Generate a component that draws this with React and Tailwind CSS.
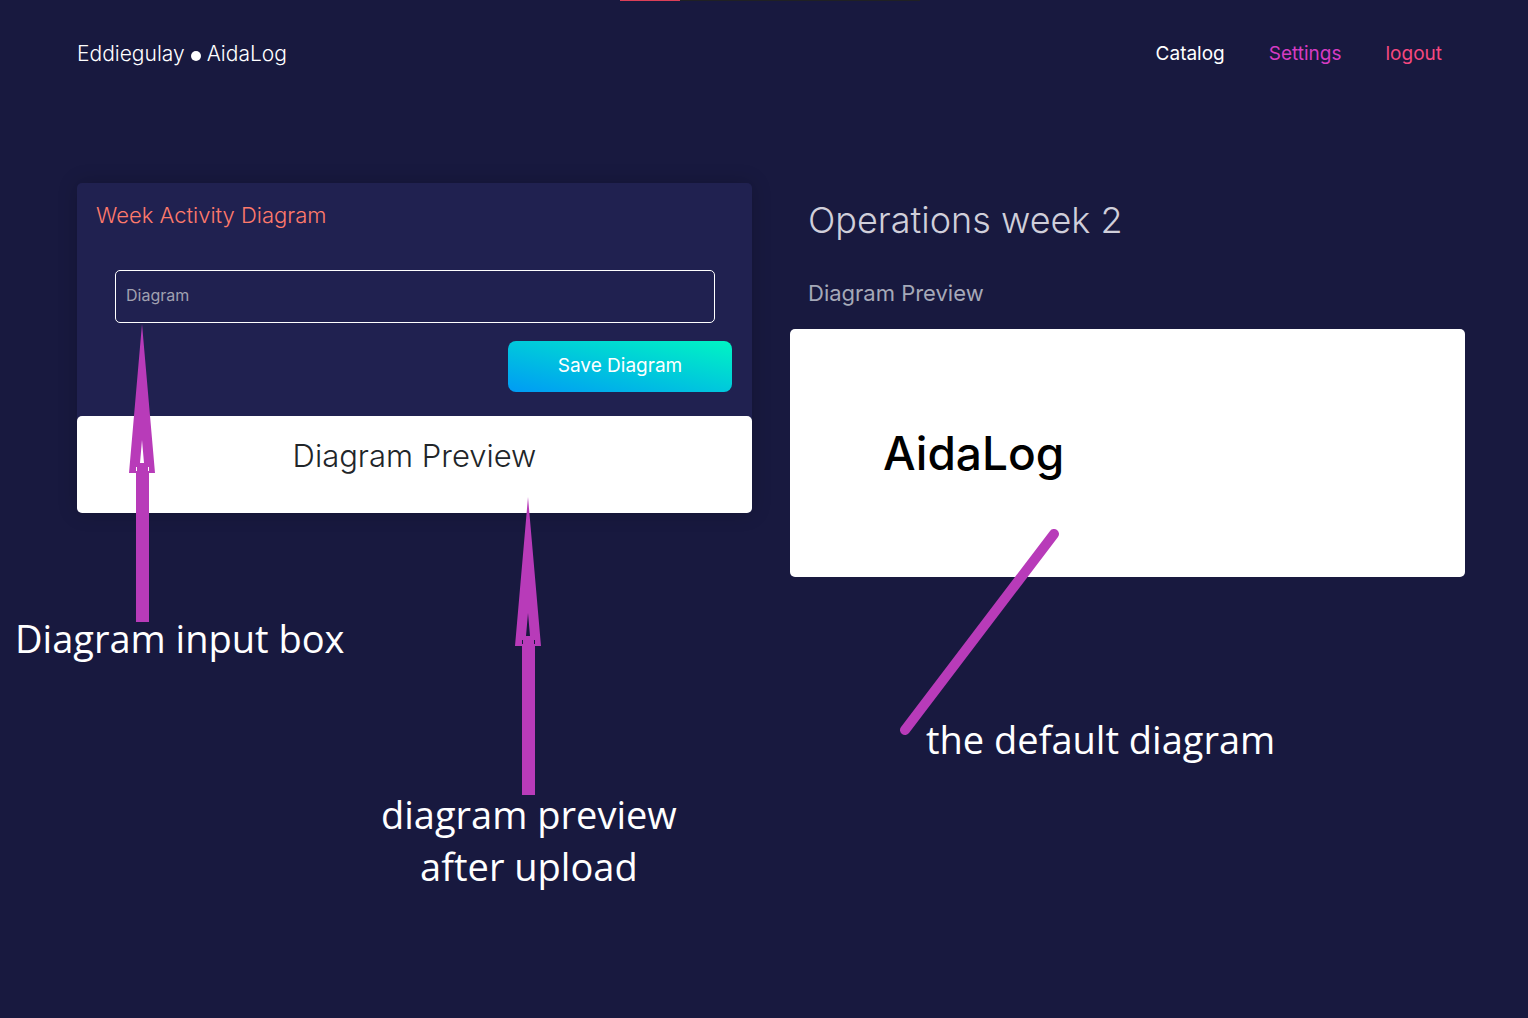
import React from "react";

const navLinks = [
  { label: "Catalog", color: "text-white" },
  { label: "Settings", color: "text-[#d63cc3]" },
  { label: "logout", color: "text-[#f5487f]" },
];

function ArrowUp() {
  return (
    <svg width="26" height="300" viewBox="0 0 26 300" fill="#b83bb9" aria-hidden="true">
      <path
        fillRule="evenodd"
        d="M13 0L26 149H20V298H7V149H0ZM13 116L11 139H15ZM7 143V147H8V143ZM19 143V147H20V143Z"
      />
    </svg>
  );
}

function Header() {
  return (
    <header className="flex items-center justify-between pt-9 pr-2">
      <a href="#home" className="flex items-center gap-[6px] text-[21px] leading-9 font-light">
        <span>Eddiegulay</span>
        <span className="mt-1 size-[10px] rounded-full bg-white" />
        <span>AidaLog</span>
      </a>
      <nav className="flex gap-11 pr-[15px] text-[19px] leading-9">
        {navLinks.map((link) => (
          <a key={link.label} href={"#" + link.label.toLowerCase()} className={link.color}>
            {link.label}
          </a>
        ))}
      </nav>
    </header>
  );
}

function DiagramForm() {
  return (
    <section className="relative">
      <div className="rounded-[5px] bg-[#202150] shadow-[0_0_20px_rgba(0,0,0,0.2)]">
        <form className="pt-4 pr-5 pb-6 pl-[19px]" onSubmit={(e) => e.preventDefault()}>
          <h2 className="text-[22px] leading-8 font-light text-[#fe7a6b]">Week Activity Diagram</h2>
          <div className="mt-[39px] mr-[17px] ml-[19px]">
            <input
              type="text"
              aria-label="Diagram"
              placeholder="Diagram"
              className="h-[53px] w-full rounded-[5px] border border-white bg-transparent px-[10px] pb-1 text-base text-white outline-none placeholder:text-[#a0a1b0]"
            />
          </div>
          <div className="mt-[18px] flex justify-end">
            <button
              type="submit"
              className="h-[51px] w-56 rounded-lg bg-[linear-gradient(to_top_right,#009bf5_0%,#00f5c3_100%)] text-[19px] text-white"
            >
              Save Diagram
            </button>
          </div>
        </form>
        <div className="h-[97px] rounded-[5px] bg-white pt-5 text-center text-[31px] leading-10 font-light text-[#212529]">
          Diagram Preview
        </div>
      </div>

      <div className="pointer-events-none absolute top-[141px] left-[52px]">
        <ArrowUp />
      </div>
      <p className="absolute top-[429px] left-[-62px] font-['Open_Sans',sans-serif] text-[38px] leading-[52px] whitespace-nowrap">
        Diagram input box
      </p>
      <div className="pointer-events-none absolute top-[314px] left-[438px]">
        <ArrowUp />
      </div>
      <p className="absolute top-[605px] left-[304px] text-center font-['Open_Sans',sans-serif] text-[38px] leading-[52px] whitespace-nowrap">
        diagram preview
        <br />
        after upload
      </p>
    </section>
  );
}

function Operations() {
  return (
    <section className="relative">
      <div className="pt-3 pl-[18px]">
        <h1 className="text-4xl leading-[50px] font-light text-[#d0cfda]">Operations week 2</h1>
        <h2 className="mt-8 text-[22px] leading-8 font-normal text-[#a5a9b8]">Diagram Preview</h2>
      </div>
      <div className="mt-5 h-[248px] rounded-[5px] bg-white pt-24 pl-[93px]">
        <span className="text-[46px] leading-[56px] font-medium text-black">AidaLog</span>
      </div>

      <svg
        className="pointer-events-none absolute top-[346px] left-[110px]"
        width="160"
        height="208"
        viewBox="0 0 160 208"
        aria-hidden="true"
      >
        <path d="M154 5L5 201" stroke="#b83bb9" strokeWidth="10" strokeLinecap="round" />
      </svg>
      <p className="absolute top-[530px] left-[136px] font-['Open_Sans',sans-serif] text-[38px] leading-[52px] whitespace-nowrap">
        the default diagram
      </p>
    </section>
  );
}

export default function App() {
  return (
    <div className="min-h-screen bg-[#18193f] font-['Inter',sans-serif] text-white">
      <div className="absolute top-0 left-1/2 -ml-36 flex h-px w-[300px] bg-[#202124]">
        <div className="w-[60px] bg-[#dc3f58]" />
      </div>
      <div className="pr-[63px] pl-[77px]">
        <Header />
        <main className="mt-[111px] grid grid-cols-2 gap-[38px]">
          <DiagramForm />
          <Operations />
        </main>
      </div>
    </div>
  );
}
